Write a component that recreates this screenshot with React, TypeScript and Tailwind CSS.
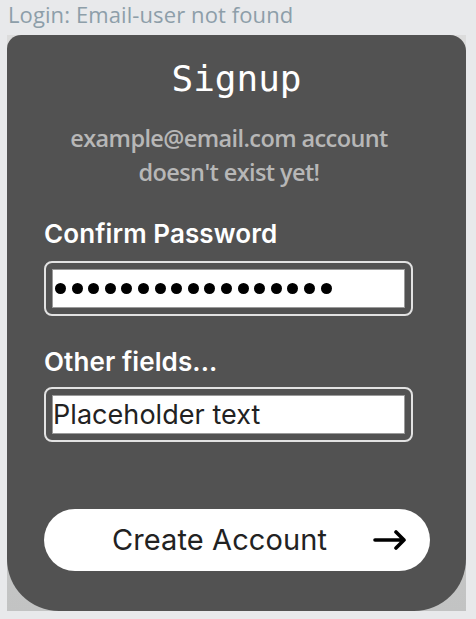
import React from "react";

function Dots() {
  return (
    <div className="flex items-center gap-[5.6px] pl-[2px]">
      {Array.from({ length: 17 }).map((_, i) => (
        <span key={i} className="block w-[11px] h-[11px] rounded-full bg-black" />
      ))}
    </div>
  );
}

function Field({ children }: { children: React.ReactNode }) {
  return (
    <div className="w-[369px] h-[55px] rounded-[8px] border-2 border-[#e2e2e2] p-[6px]">
      <div className="w-full h-full bg-white border border-[#9a9a9a] flex items-center overflow-hidden">
        {children}
      </div>
    </div>
  );
}

export default function App() {
  return (
    <div className="w-[476px] h-[619px] bg-[#e8e9eb] overflow-hidden">
      <div
        className="h-[35px] pl-[8px] text-[22px] leading-[28px] text-[#8d9ea9] tracking-[0.1px]"
        style={{ fontFamily: '"Open Sans", sans-serif' }}
      >
        Login: Email-user not found
      </div>
      <div className="ml-[7px] w-[459px] h-[576px] bg-gradient-to-b from-[#dcdcdc] to-[#c2c3c3]">
        <div className="w-full h-full bg-[#525252] rounded-tl-[14px] rounded-tr-[16px] rounded-b-[52px] flex flex-col">
          <div
            className="mt-[20px] text-center text-[36px] leading-[48px] text-white"
            style={{ fontFamily: '"DejaVu Sans Mono", monospace' }}
          >
            Signup
          </div>
          <div
            className="mt-[18px] w-[444px] text-[23.5px] leading-[34px] text-[#b7b7b7] text-center font-semibold"
            style={{ fontFamily: '"Open Sans", sans-serif', letterSpacing: "-0.6px" }}
          >
            example@email.com account
            <br />
            doesn't exist yet!
          </div>
          <div className="pl-[37px] mt-[28px] flex flex-col" style={{ fontFamily: "Inter, sans-serif" }}>
            <div className="text-[26px] leading-[34px] font-semibold text-white tracking-[0.1px]">Confirm Password</div>
            <div className="mt-[10px]">
              <Field>
                <Dots />
              </Field>
            </div>
            <div className="mt-[29px] text-[26px] leading-[34px] font-semibold text-white tracking-[0.1px]">Other fields...</div>
            <div className="mt-[8px]">
              <Field>
                <span className="text-[27px] leading-[32px] text-[#222] tracking-[0.05px]">Placeholder text</span>
              </Field>
            </div>
            <div className="mt-[67px] w-[386px] h-[62px] rounded-full bg-white flex items-center">
              <span className="ml-[68px] text-[29px] text-[#222] tracking-[0.1px]">Create Account</span>
              <svg className="ml-[46px]" width="34" height="20" viewBox="0 0 34 20">
                <path d="M2 10 H31 M23 2 L31 10 L23 18" stroke="#000" strokeWidth="3.6" fill="none" strokeLinecap="round" strokeLinejoin="round" />
              </svg>
            </div>
          </div>
        </div>
      </div>
    </div>
  );
}
